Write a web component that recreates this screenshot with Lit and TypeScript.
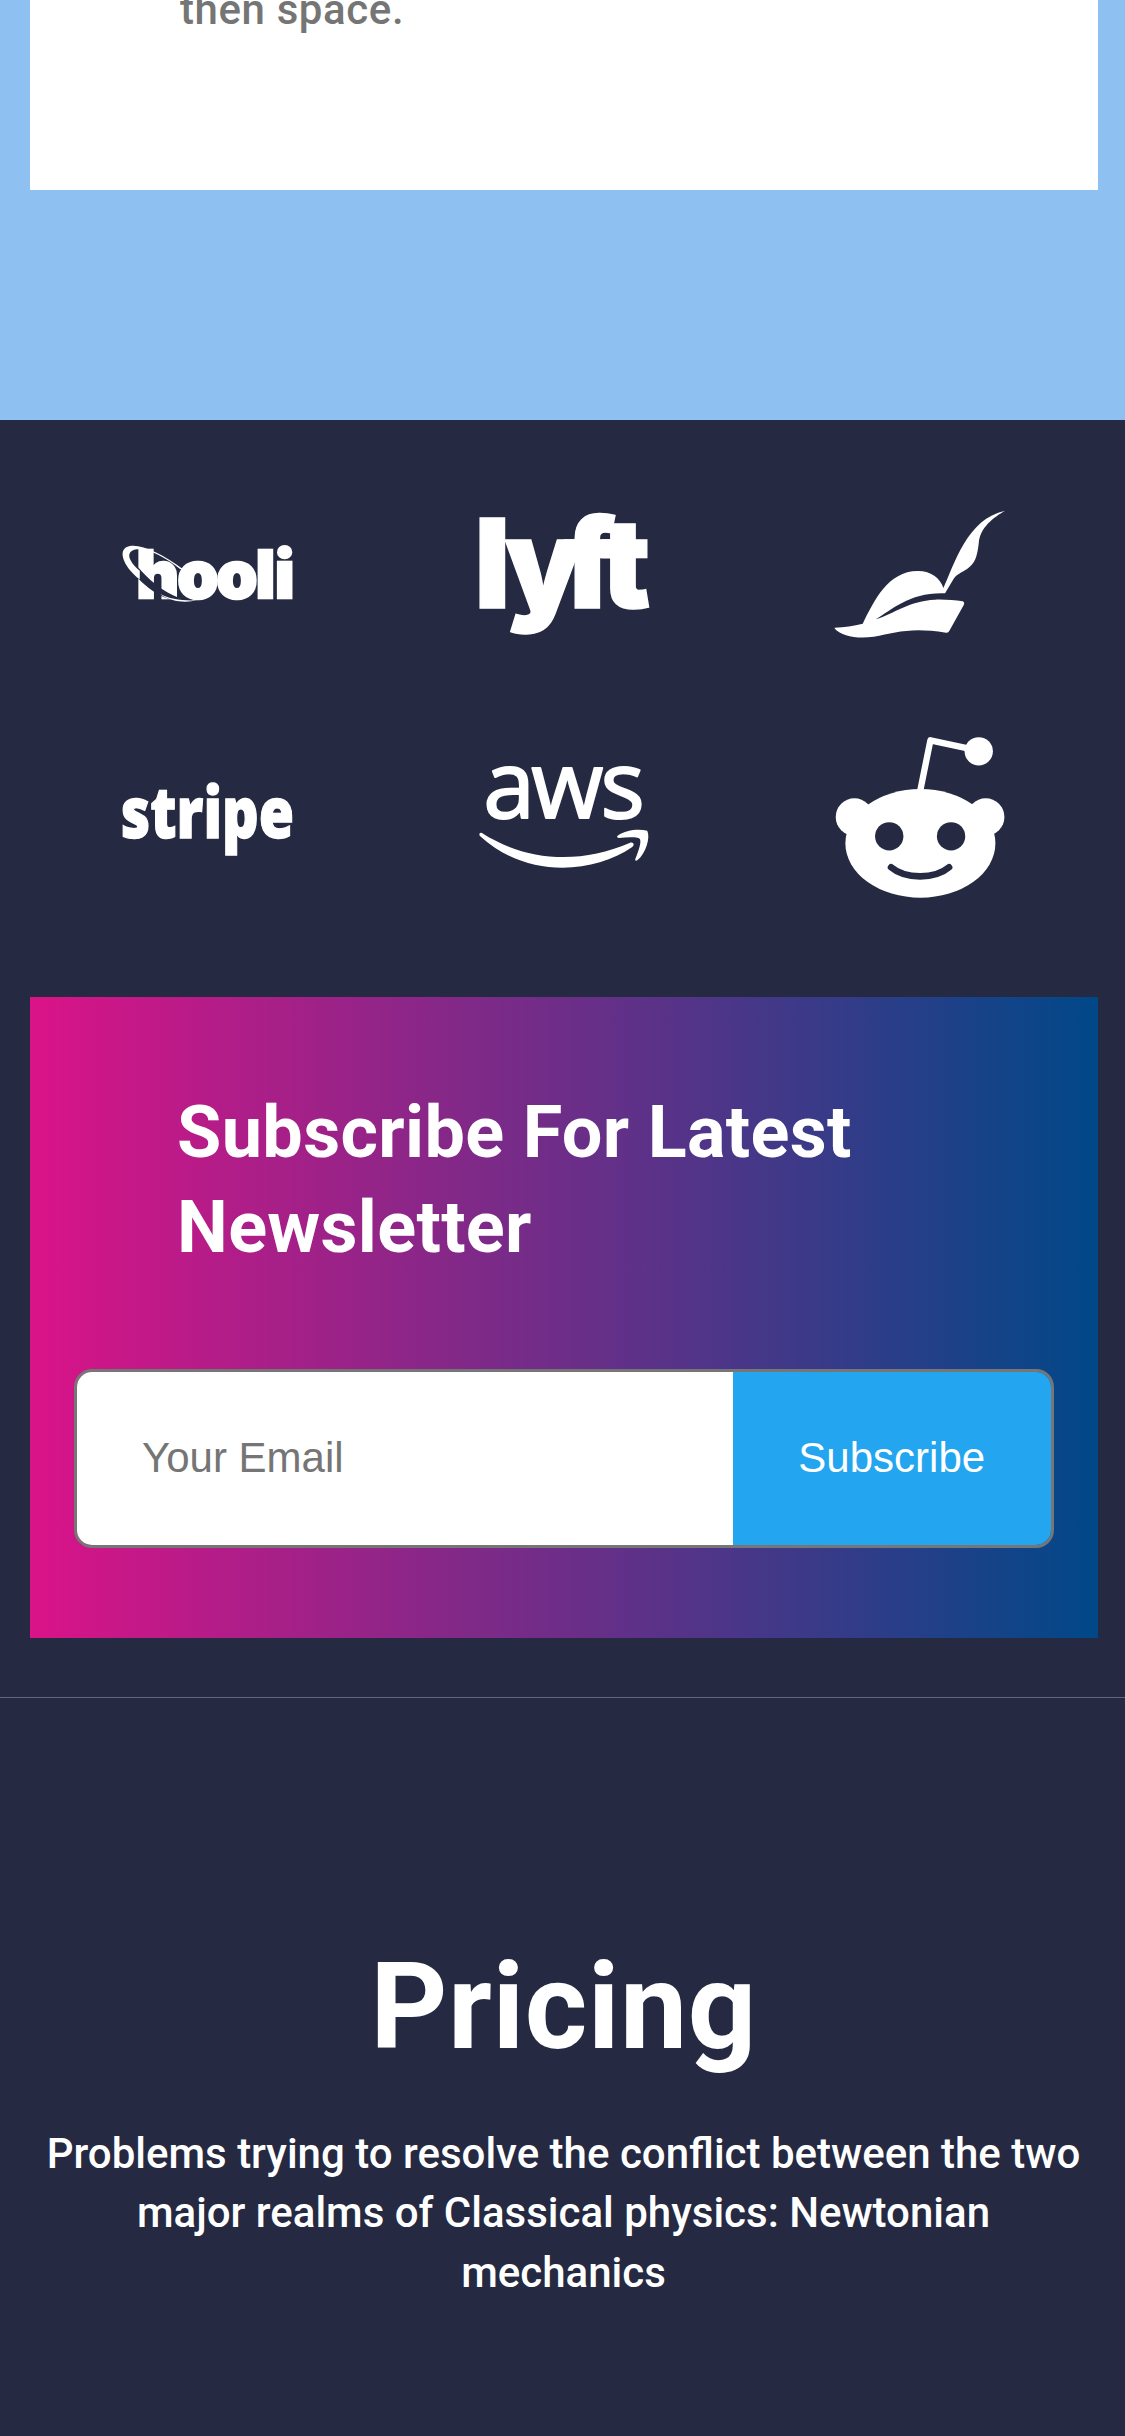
import { LitElement, html, css, svg } from "lit";
import { customElement } from "lit/decorators.js";

const hooli = svg`<svg class="logo" viewBox="23.7 -138 540 540" role="img" aria-label="hooli">
  <text class="w-hooli" x="79 202 319 437 495" y="204">hooli</text>
  <path class="bg" d="M84 112C112 146 160 188 206 203L196 213C150 203 108 172 84 145Z"/>
  <path d="M218 117C150 66 82 36 50 51C20 66 48 118 89 148L89 122C60 98 48 72 66 62C96 46 160 76 210 117Z"/>
  <path d="M150 192C178 207 215 213 260 211C228 219 180 216 150 192Z"/>
</svg>`;

const lyft = svg`<svg class="logo" viewBox="26.25 -48 540 540" role="img" aria-label="lyft">
  <text class="w-lyft" x="26 118 294 407" y="325">lyft</text>
</svg>`;

const hat = svg`<svg class="logo" viewBox="28.8 -48 540 540" role="img" aria-label="hat">
  <path d="M43 383C72 382 100 377 127 371C160 305 202 213 292 213C334 213 360 236 369 264C402 192 440 56 554 32C520 52 478 82 475 130C470 172 464 190 440 207C423 219 408 222 399 238L374 280C270 276 216 328 166 358C222 340 268 302 344 299C375 298 402 301 427 304Q434 308 430 315L387 392Q384 399 377 398C270 380 226 398 160 410C108 417 64 408 43 386Z"/>
</svg>`;

const stripe = svg`<svg class="logo" viewBox="23.7 -129 540 540" role="img" aria-label="stripe">
  <text class="w-stripe" x="32" y="203" textLength="520" lengthAdjust="spacingAndGlyphs">stripe</text>
</svg>`;

const aws = svg`<svg class="logo" viewBox="26.25 -69 540 540" role="img" aria-label="aws">
  <text class="w-aws" x="54 198 406" y="204">aws</text>
  <path d="M50 249C185 335 345 343 493 279C503 274 510 284 501 291C380 374 180 384 44 258C40 253 44 246 50 249Z"/>
  <path d="M459 256C480 240 520 235 546 242C556 262 542 310 516 331C511 334 508 331 511 325C520 302 529 276 524 267C515 260 485 262 461 264C454 263 454 259 459 256Z"/>
</svg>`;

const reddit = svg`<svg class="logo" viewBox="28.8 6 540 540" role="img" aria-label="reddit">
  <ellipse cx="300" cy="355" rx="225" ry="163"/>
  <circle cx="102" cy="276" r="56"/>
  <circle cx="496" cy="276" r="56"/>
  <circle cx="475" cy="79" r="42.5"/>
  <path class="line" d="M299 200L330 46L446 71"/>
  <circle class="bg" cx="206.5" cy="334" r="42.5"/>
  <circle class="bg" cx="392" cy="334" r="42.5"/>
  <path class="mouth" d="M212 427C254 463 344 463 386 427"/>
</svg>`;

@customElement("app-root")
export class AppRoot extends LitElement {
  static styles = css`
    :host {
      display: block;
      height: 2436px;
      overflow: hidden;
      background: #252a42;
      color: #fff;
      font-family: Roboto, sans-serif;
    }
    h1, h2, p { margin: 0; }
    .feature {
      box-sizing: border-box;
      height: 420px;
      padding: 0 27.5px 0 30px;
      background: #8ec1f2;
    }
    .card {
      box-sizing: border-box;
      height: 189.7px;
      padding-left: 150px;
      overflow: hidden;
      background: #fff;
    }
    .card p {
      margin-top: -20px;
      color: #757575;
      font-size: 42px;
      font-weight: 500;
      line-height: 59.4px;
      letter-spacing: 0.6px;
    }
    .logos {
      display: grid;
      grid-template-columns: repeat(3, 1fr);
      row-gap: 63px;
      justify-items: center;
      padding: 64px 27.5px 90px 30px;
    }
    .logo {
      display: block;
      width: 180px;
      height: 180px;
      fill: #fff;
      overflow: visible;
    }
    .bg { fill: #252a42; }
    .line {
      fill: none;
      stroke: #fff;
      stroke-width: 19;
      stroke-linejoin: round;
    }
    .mouth {
      fill: none;
      stroke: #252a42;
      stroke-width: 20;
      stroke-linecap: round;
    }
    .w-hooli { font: 900 196px Inter, sans-serif; stroke: #fff; stroke-width: 8; }
    .w-lyft { font: 900 372px Inter, sans-serif; stroke: #fff; stroke-width: 4; }
    .w-stripe { font: 800 214px "Open Sans", sans-serif; stroke: #fff; stroke-width: 4; }
    .w-aws { font: 500 279px "Open Sans", sans-serif; stroke: #fff; stroke-width: 6; stroke-linejoin: round; }
    .newsletter {
      box-sizing: border-box;
      height: 641px;
      margin: 0 27.5px 0 30px;
      padding: 88px 44px 0;
      background: linear-gradient(90deg, #da1388, #004888);
    }
    .newsletter h2 {
      padding-left: 103px;
      font-size: 72px;
      font-weight: 700;
      line-height: 95px;
      letter-spacing: 0.33px;
    }
    .form {
      box-sizing: border-box;
      display: flex;
      height: 179px;
      margin-top: 94px;
      border: 3px solid #767676;
      border-radius: 18px;
      overflow: hidden;
      font: 42px "Liberation Sans", Arial, sans-serif;
    }
    .email {
      flex: 1;
      min-width: 0;
      padding: 0 0 1px 65px;
      border: 0;
      border-radius: 0;
      background: #fff;
      font: inherit;
    }
    .email::placeholder { color: #757575; opacity: 1; }
    .send {
      width: 317.5px;
      padding: 0 0 1px;
      border: 0;
      background: #23a5f0;
      color: #fff;
      font: inherit;
    }
    .pricing {
      margin-top: 59px;
      padding: 237px 28px 0 30px;
      border-top: 1px solid #62667a;
      text-align: center;
    }
    .pricing h1 {
      font-size: 120px;
      font-weight: 700;
      line-height: 144px;
      letter-spacing: 0.5px;
    }
    .pricing p {
      margin-top: 45px;
      font-size: 42px;
      font-weight: 500;
      line-height: 59.4px;
    }
  `;

  render() {
    return html`
      <section class="feature">
        <div class="card"><p>then space.</p></div>
      </section>
      <section class="logos">${hooli}${lyft}${hat}${stripe}${aws}${reddit}</section>
      <section class="newsletter">
        <h2>Subscribe For Latest<br />Newsletter</h2>
        <div class="form">
          <input class="email" type="email" placeholder="Your Email" />
          <button class="send">Subscribe</button>
        </div>
      </section>
      <section class="pricing">
        <h1>Pricing</h1>
        <p>Problems trying to resolve the conflict between the two major realms of Classical physics: Newtonian mechanics</p>
      </section>
    `;
  }
}
